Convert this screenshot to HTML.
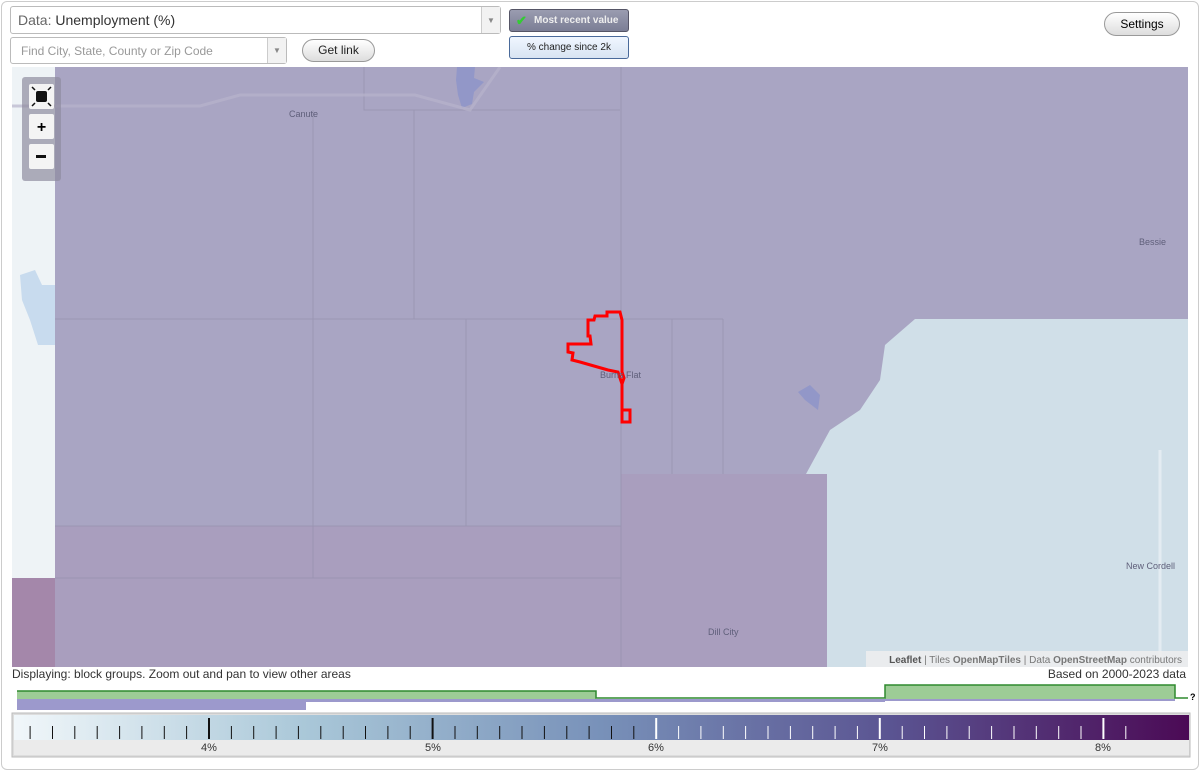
<!DOCTYPE html>
<html><head><meta charset="utf-8"><style>
body{margin:0;width:1200px;height:771px;background:#fff;font-family:"Liberation Sans",sans-serif;position:relative;overflow:hidden}
.frame{position:absolute;left:1px;top:1px;width:1196px;height:767px;border:1px solid #ccc;border-radius:6px}
.sel{position:absolute;background:#fff;border:1px solid #bbb;border-radius:3px;box-sizing:border-box}
.btn{position:absolute;border:1px solid #999;border-radius:12px;background:linear-gradient(#fff,#ddd);font-size:12px;text-align:center;box-sizing:border-box}
.arrow{position:absolute;right:0;top:0;bottom:0;width:18px;border-left:1px solid #ccc;background:#f2f2f2;color:#888;font-size:8px;text-align:center}
</style></head><body>
<div class="frame"></div>
<div class="sel" style="left:10px;top:6px;width:491px;height:28px;font-size:14px;line-height:27px;padding-left:7px;color:#333"><span style="color:#666">Data:</span> Unemployment (%)<div class="arrow" style="line-height:27px">▼</div></div>
<div class="sel" style="left:10px;top:37px;width:277px;height:27px;font-size:12px;line-height:26px;padding-left:10px;color:#999">Find City, State, County or Zip Code<div class="arrow" style="line-height:26px">▼</div></div>
<div class="btn" style="left:302px;top:39px;width:73px;height:23px;line-height:21px;color:#222">Get link</div>
<div style="position:absolute;left:509px;top:9px;width:120px;height:23px;border:1px solid #556;border-radius:3px;background:linear-gradient(#9a9cb0,#7b7e95);color:#eee;font-size:10px;font-weight:bold;line-height:21px;box-sizing:border-box;padding-left:24px">Most recent value<span style="position:absolute;left:6px;top:0;color:#3c3;font-size:13px">✔</span></div>
<div style="position:absolute;left:509px;top:36px;width:120px;height:23px;border:1px solid #4a6a9a;border-radius:3px;background:linear-gradient(#f0f6ff,#d8e4f2);color:#222;font-size:10px;line-height:21px;text-align:center;box-sizing:border-box">% change since 2k</div>
<div class="btn" style="left:1104px;top:12px;width:76px;height:24px;line-height:22px">Settings</div>

<svg style="position:absolute;left:12px;top:67px" width="1176" height="600" viewBox="12 67 1176 600">
<rect x="12" y="67" width="1176" height="600" fill="#eef3f6"/>
<rect x="55" y="67" width="1133" height="600" fill="#a9a5c3"/>
<rect x="55" y="526" width="566" height="141" fill="#a99ebe"/>
<rect x="621" y="474" width="206" height="193" fill="#a99ebe"/>
<rect x="12" y="578" width="43" height="89" fill="#a487aa"/>
<path d="M915,319 L1188,319 L1188,667 L827,667 L827,474 L806,474 L830,430 L860,410 L880,380 L885,345 Z" fill="#d0dfe8"/>
<path d="M20,275 L35,270 L42,285 L55,285 L55,345 L38,345 L30,320 L22,300 Z" fill="#c8dbee"/>
<path d="M457,67 L475,67 L474,78 L484,82 L474,92 L472,104 L462,108 L458,95 L456,80 Z M798,392 L810,385 L820,395 L818,410 L805,400 Z" fill="#8c93c9" opacity=".8"/>
<g stroke="#9490ac" stroke-width="1" fill="none" opacity=".7">
<path d="M364,67V110H620M414,110V319M55,319H723M466,319V526M672,319V474M723,319V474M313,110V578M55,526H621M55,578H621M621,67V667"/>
</g>
<path d="M12,106 H200 L240,95 H415 L470,110 L500,67" stroke="#b8b4cc" stroke-width="3" fill="none" opacity=".7"/>
<path d="M1160,450 V667" stroke="#e4ecf2" stroke-width="3" fill="none"/>
<path d="M588,320 L594,320 L595,316 L607,316 L607,312 L620,312 L622,320 L622,372 L624,378 L622,384 L622,410 L630,410 L630,422 L622,422 L622,384 L618,372 L608,370 L580,362 L572,360 L573,353 L568,352 L568,344 L591,344 L590,336 L588,336 Z" fill="none" stroke="#f00" stroke-width="3"/>
<g font-size="9" fill="#5f5f7a" font-family="Liberation Sans,sans-serif">
<text x="289" y="117">Canute</text><text x="600" y="378">Burns Flat</text><text x="1139" y="245">Bessie</text><text x="708" y="635">Dill City</text><text x="1126" y="569">New Cordell</text></g>
<rect x="22" y="77" width="39" height="104" rx="3" fill="#8f8c9f" opacity=".7"/>
<rect x="29" y="84" width="25" height="25" rx="2" fill="#f4f4f4"/><rect x="36" y="91" width="11" height="11" rx="2" fill="#111"/>
<path d="M32,87l3,3M51,87l-3,3M32,106l3,-3M51,106l-3,-3" stroke="#111" stroke-width="1.5"/>
<rect x="29" y="114" width="25" height="25" rx="2" fill="#f4f4f4"/><text x="41.5" y="132" font-size="16" font-weight="bold" text-anchor="middle">+</text>
<rect x="29" y="144" width="25" height="25" rx="2" fill="#f4f4f4"/><rect x="36" y="155" width="10" height="3" fill="#111"/>
<rect x="866" y="651" width="322" height="16" fill="#eeeeee" opacity=".85"/>
<text x="1182" y="663" font-size="10" text-anchor="end" fill="#777"><tspan font-weight="bold" fill="#555">Leaflet</tspan> | Tiles <tspan font-weight="bold">OpenMapTiles</tspan> | Data <tspan font-weight="bold">OpenStreetMap</tspan> contributors</text>
</svg>

<div style="position:absolute;left:12px;top:667px;font-size:12px;color:#333">Displaying: block groups. Zoom out and pan to view other areas</div>
<div style="position:absolute;right:14px;top:667px;font-size:12px;color:#333">Based on 2000-2023 data</div>

<svg style="position:absolute;left:0;top:680px" width="1200" height="91">
<rect x="17" y="11" width="579" height="8" fill="#9dcc96"/>
<rect x="885" y="5" width="290" height="14" fill="#9dcc96"/>
<path d="M17,11H596V18H885V5H1175V18H1188" stroke="#2f8a2f" stroke-width="1.5" fill="none"/>
<rect x="17" y="19" width="289" height="11" fill="#9c99cc"/>
<rect x="306" y="19" width="579" height="3" fill="#9c99cc"/>
<rect x="885" y="19" width="290" height="2" fill="#9c99cc"/>
<text x="1190" y="20" font-size="9" font-weight="bold">?</text>
<rect x="12" y="33" width="1178" height="44" fill="#ddd" stroke="#bbb"/>
<defs><linearGradient id="g" x1="0" x2="1"><stop offset="0" stop-color="#f1f7fa"/><stop offset=".25" stop-color="#a9c7d8"/><stop offset=".5" stop-color="#7891b9"/><stop offset=".75" stop-color="#5a5391"/><stop offset="1" stop-color="#4b0a55"/></linearGradient></defs>
<rect x="14" y="35" width="1175" height="25" fill="url(#g)"/>
<rect x="14" y="60" width="1175" height="15" fill="#ebebeb"/>
<g id="t"></g>
<g font-size="11" fill="#333" text-anchor="middle"><text x="209" y="71">4%</text><text x="433" y="71">5%</text><text x="656" y="71">6%</text><text x="880" y="71">7%</text><text x="1103" y="71">8%</text></g>
</svg>
<script>
var g=document.getElementById('t'),s='';
for(var i=-8;i<=41;i++){var x=209+i*22.36;if(x<20||x>1185)continue;var maj=i%10==0;var c=x<640?'#111':'#fff';
s+='<line x1="'+x.toFixed(1)+'" x2="'+x.toFixed(1)+'" y1="'+(maj?38:46)+'" y2="59" stroke="'+c+'" stroke-width="'+(maj?2:1)+'"/>';}
g.innerHTML=s;
</script>
</body></html>
